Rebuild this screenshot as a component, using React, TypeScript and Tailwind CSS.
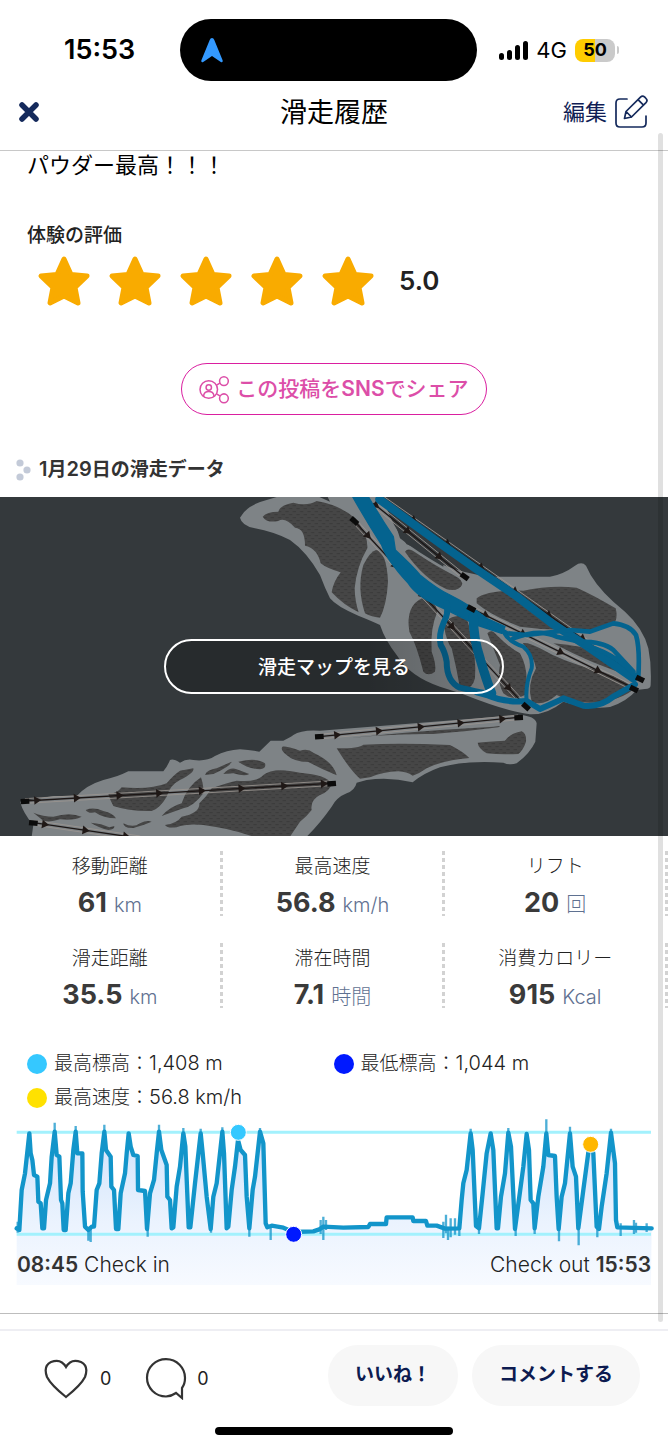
const SIGNAL_BARS = ["h-[7px]", "h-[10px]", "h-[15px]", "h-[19px]"];

const STATS = [
  { label: "移動距離", value: "61", unit: "km" },
  { label: "最高速度", value: "56.8", unit: "km/h" },
  { label: "リフト", value: "20", unit: "回" },
  { label: "滑走距離", value: "35.5", unit: "km" },
  { label: "滞在時間", value: "7.1", unit: "時間" },
  { label: "消費カロリー", value: "915", unit: "Kcal" },
];

const LEGEND = [
  { color: "bg-[#35c8ff]", label: "最高標高：", value: "1,408 m" },
  { color: "bg-[#0019ff]", label: "最低標高：", value: "1,044 m" },
  { color: "bg-[#ffe100]", label: "最高速度：", value: "56.8 km/h" },
];

const ELEVATION =
  "50,565 58,570 65,450 75,400 88,280 92,340 97,360 102,405 112,410 115,485 122,490 127,565 132,565 138,480 150,430 155,350 164,275 170,345 178,350 183,480 187,490 191,570 197,570 205,460 212,430 220,330 227,275 232,340 247,340 248,455 255,560 265,570 275,560 282,560 290,450 298,430 305,340 313,275 318,330 332,350 334,440 342,450 348,567 355,567 362,460 375,400 380,340 386,280 392,320 400,345 413,348 414,450 435,453 441,567 450,460 462,420 470,340 477,275 484,330 500,375 502,470 510,480 515,565 520,562 530,440 540,380 550,280 556,320 566,562 571,562 585,430 602,280 608,340 620,470 632,567 640,470 650,430 667,275 672,340 680,565 685,560 695,450 705,380 714,300 722,330 735,345 740,470 748,565 758,450 765,410 780,275 790,310 797,550 802,562 815,557 850,563 880,576 940,574 958,568 970,560 1030,563 1105,561 1110,552 1158,552 1160,532 1238,532 1240,543 1278,543 1282,557 1310,557 1335,566 1378,565 1385,480 1390,430 1400,390 1412,280 1418,330 1428,558 1437,565 1448,460 1460,340 1472,280 1480,330 1490,565 1494,565 1503,470 1515,400 1525,278 1533,320 1545,567 1558,470 1570,380 1580,282 1587,330 1592,480 1600,490 1604,565 1615,470 1630,380 1639,280 1645,345 1665,348 1670,470 1676,567 1685,470 1695,430 1710,280 1718,380 1728,410 1735,565 1750,450 1770,300 1780,340 1790,560 1797,567 1805,500 1820,400 1833,278 1845,370 1848,540 1852,562 1955,565";

const SPIKES =
  "M164 300V248M227 300V258M313 300V254M477 300V254M550 290V264M602 290V266M667 290V262M780 290V264M265 560V602M272 560V606M443 560V590M633 560V578M748 560V590M812 560V600M53 545V578M962 540V582M970 530V600M978 540V570M1330 545V594M1338 524V580M1344 560V600M1352 535V592M1365 535V584M1378 545V588M1412 290V266M1525 290V264M1639 300V238M1710 290V260M1833 290V266M1547 560V588M1604 560V582M1677 560V604M1736 560V616M1792 560V592M1862 550V588M1902 540V582M1908 548V578M1940 550V576M1437 560V582";

function Lift({ from, to, marks }: { from: [number, number]; to: [number, number]; marks: number[] }) {
  const dx = to[0] - from[0];
  const dy = to[1] - from[1];
  const angle = (Math.atan2(dy, dx) * 180) / Math.PI;
  const length = Math.hypot(dx, dy);
  return (
    <g transform={`translate(${from[0]} ${from[1]}) rotate(${angle})`}>
      <path d={`M0 7H${length}M0 -7H${length}`} stroke="#9a9490" strokeWidth="2.500" />
      <path d={`M0 0H${length}`} stroke="#1c1615" strokeWidth="4" />
      {marks.map((m) => (
        <path key={m} d="M-9 -13L12 0L-9 13Z" fill="#1f1816" transform={`translate(${m * length} 0)`} />
      ))}
    </g>
  );
}

function Station({ x, y, angle }: { x: number; y: number; angle: number }) {
  return <rect x="-13" y="-8" width="26" height="16" fill="#0b0b0b" transform={`translate(${x} ${y}) rotate(${angle})`} />;
}

function SlopeMap() {
  return (
    <svg viewBox="0 497 668 339" className="block w-full" role="img" aria-label="滑走マップ">
      <defs>
        <pattern id="trees" width="22" height="18" patternUnits="userSpaceOnUse">
          <rect width="22" height="18" fill="#464646" />
          <path d="M1 5h10M12 14h10" stroke="#3c3c3c" strokeWidth="4" />
        </pattern>
      </defs>
      <rect y="497" width="668" height="339" fill="#34393c" />
      <g transform="translate(230 495) scale(0.33333)" fill="none">
        <path
          fill="#7e8386"
          d="M30 68Q50 30 110 15L160 0H440L470 40Q490 95 530 148Q580 165 640 210Q700 235 780 245L960 245Q1000 238 1035 212Q1055 198 1068 212Q1090 265 1150 320L1185 350Q1240 400 1255 460Q1265 510 1262 570Q1262 582 1245 582L1220 585Q1190 620 1140 636Q1080 645 1000 620Q950 660 900 658Q830 650 700 598L630 575Q540 545 500 480Q465 435 450 390Q430 380 385 362Q320 335 300 310Q285 280 270 240Q230 170 180 135Q130 110 75 100Q35 92 30 68Z"
        />
        <path fill="#34393c" d="M255 0L300 20L290 0Z M450 0L640 185V215Q560 170 510 130Q490 60 450 0Z" />
        <g fill="url(#trees)">
          <path d="M98 65Q110 50 145 50Q150 30 190 23Q230 35 260 18Q330 30 375 70Q415 120 412 160Q380 215 374 280Q375 320 386 352Q340 330 305 292Q310 260 332 232Q290 220 272 205Q262 160 225 152Q225 100 195 98Q165 65 145 78Q110 85 98 65Z" />
          <path d="M438 165Q470 170 474 260Q470 330 450 368Q420 365 405 355Q380 280 400 210Q420 170 438 165Z" />
          <path d="M525 170Q535 155 560 175Q620 215 670 240Q700 255 696 270Q685 290 650 283Q580 250 525 170Z" />
          <path d="M580 308Q615 310 622 350Q600 400 605 470Q620 510 615 530Q595 545 580 530Q560 450 538 410Q525 330 580 308Z" />
          <path d="M740 310Q770 285 880 287Q960 270 1040 278Q1090 300 1157 340Q1165 370 1150 390Q1080 415 1010 405Q940 405 870 395Q780 360 740 325Z" />
          <path d="M642 395Q650 360 700 362Q715 370 720 410Q740 490 735 550Q725 590 690 580Q680 520 665 460Q650 440 642 395Z" />
          <path d="M772 415Q785 400 800 420Q840 460 870 475Q900 530 885 600Q850 620 820 595Q800 560 810 510Q790 460 772 415Z" />
          <path d="M878 445Q890 440 930 460Q1000 500 1080 520Q1150 535 1215 580Q1180 610 1130 618Q1050 635 980 600Q940 635 905 620Q890 570 918 520Q910 480 878 445Z" />
          <path d="M970 445Q1040 450 1110 470Q1160 500 1210 545Q1090 510 970 445Z" />
        </g>
        <Lift from={[373, 78]} to={[888, 635]} marks={[0.08, 0.24, 0.4, 0.57, 0.9]} />
        <Lift from={[430, 25]} to={[702, 245]} marks={[0.03, 0.38, 0.73]} />
        <Lift from={[724, 340]} to={[1212, 580]} marks={[0.09, 0.32, 0.55, 0.78]} />
        <Lift from={[450, 5]} to={[1230, 552]} marks={[0.13, 0.26, 0.39, 0.52, 0.65, 0.78, 0.91]} />
        <g strokeLinejoin="round" strokeLinecap="round" stroke="#04638f">
          <path fill="#04638f" strokeWidth="4" d="M365 0H412Q450 65 490 125L496 165Q550 215 570 240Q625 285 660 300Q720 330 770 370L825 395L815 415L740 390Q690 365 640 340Q560 305 535 265Q470 195 455 150Q410 80 365 0Z" />
          <path strokeWidth="25" d="M448 13L630 145L740 223L860 304L970 388L1060 446L1210 550" />
          <path strokeWidth="14" d="M1060 450Q1150 470 1220 545M1225 545Q1230 460 1218 420Q1200 390 1150 385L1080 410L1020 405L890 420L830 415L780 385M850 430Q930 400 980 425L1050 440Q1120 440 1150 465L1210 530" />
          <path strokeWidth="12" d="M820 410Q835 440 880 455Q910 480 905 520Q885 570 890 620" />
          <path strokeWidth="18" d="M650 325Q657 355 640 385Q625 420 632 450Q645 470 650 500Q650 560 690 578Q740 590 770 595" />
          <path strokeWidth="28" d="M730 365Q730 430 750 490Q770 560 785 595" />
          <path strokeWidth="18" d="M740 592L770 600Q830 625 890 618L930 642Q980 620 1000 610L1060 632Q1110 638 1150 605L1215 568" />
        </g>
        <Station x={373} y={78} angle={42} />
        <Station x={704} y={245} angle={35} />
        <Station x={724} y={341} angle={27} />
        <Station x={888} y={635} angle={42} />
        <Station x={1230} y={552} angle={27} />
        <Station x={1212} y={582} angle={27} />
      </g>
      <g transform="translate(0 700) scale(0.33333)" fill="none">
        <path
          fill="#7e8386"
          d="M60 305L160 288H230Q260 255 310 240Q350 232 385 214H490Q502 200 510 180Q520 175 540 188Q560 175 580 180Q620 185 645 168Q680 150 720 148Q750 150 778 155L812 122H850Q875 110 880 105Q905 88 960 92L1560 45Q1605 48 1610 70L1606 125Q1590 160 1550 190Q1530 197 1510 188Q1400 180 1320 202Q1270 220 1238 247Q1170 230 1100 240L1070 248Q1065 270 1040 280Q1010 292 995 320Q960 370 920 410H95L100 375Q70 340 60 305Z"
        />
        <g fill="url(#trees)">
          <path d="M325 282Q350 282 365 262Q450 270 500 250Q520 225 540 212L580 205Q585 218 540 240Q510 255 500 290Q480 325 455 333Q390 335 340 318Q330 300 325 282Z" />
          <path d="M485 348Q510 320 545 310Q560 260 603 232Q612 260 610 280Q580 320 550 325Z" />
          <path d="M615 225Q620 210 650 205L695 185Q690 200 640 222Z M670 222Q690 200 710 208L748 222Q735 230 700 220Z M715 185Q770 172 795 190Q800 205 780 208Q740 205 715 185Z" />
          <path d="M635 265Q680 248 710 242Q770 248 790 225Q820 200 900 218Q980 225 995 250Q990 275 960 285Q930 300 935 330Q920 350 900 365L870 410H760Q690 385 610 375Q560 370 530 382Q500 385 495 375Q530 370 545 350Q600 340 598 310Q620 290 635 265Z" />
          <path d="M100 338Q130 350 160 350Q210 335 245 350Q225 362 180 358Q150 368 130 362Z M257 330Q280 320 310 333Q340 340 348 355Q310 355 285 337Q265 342 257 330Z M272 368Q310 372 328 382L343 378Q345 388 325 390Q300 385 272 368Z M370 370Q400 385 420 370Q440 360 455 365Q425 378 400 384Q370 385 370 370Z" />
          <path d="M847 140Q860 138 900 152Q925 145 940 158Q1000 185 1010 226Q970 210 925 186Q880 185 860 165Q840 150 847 140Z" />
          <path d="M1010 145Q1080 145 1090 134Q1200 128 1350 135Q1390 155 1408 174Q1330 180 1280 205Q1260 220 1238 227Q1220 215 1195 214Q1150 215 1110 232L1080 236Q1050 210 1010 145Z" />
          <path d="M1433 128Q1460 125 1515 122Q1530 100 1565 94Q1580 100 1578 125Q1570 150 1555 162Q1500 165 1460 160Q1435 145 1433 128Z" />
          <path d="M960 124Q1200 95 1480 80Q1510 75 1495 82Q1400 95 1300 102Q1150 100 960 124Z" />
        </g>
        <Lift from={[75, 303]} to={[990, 250]} marks={[0.04, 0.17, 0.31, 0.44, 0.58, 0.71, 0.85, 0.98]} />
        <Lift from={[100, 368]} to={[420, 415]} marks={[0.11, 0.49, 0.87]} />
        <Lift from={[958, 110]} to={[1555, 52]} marks={[0.09, 0.3, 0.51, 0.71, 0.92]} />
        <Station x={75} y={304} angle={-3} />
        <Station x={100} y={369} angle={6} />
        <Station x={995} y={251} angle={-4} />
        <Station x={958} y={110} angle={-3} />
        <Station x={1556} y={53} angle={-3} />
      </g>
    </svg>
  );
}

function ElevationChart() {
  return (
    <svg viewBox="0 240 2004 500" className="block w-full overflow-visible" role="img" aria-label="標高グラフ">
      <defs>
        <linearGradient id="area" x1="0" y1="270" x2="0" y2="735" gradientUnits="userSpaceOnUse">
          <stop offset="0" stopColor="#cfe2fb" />
          <stop offset="0.6" stopColor="#ebf3fe" />
          <stop offset="1" stopColor="#f7faff" />
        </linearGradient>
      </defs>
      <polygon points={`50,735 ${ELEVATION} 1953,735`} fill="url(#area)" />
      <path d="M50 277H1953M50 583H1953" stroke="#a3f1fd" strokeWidth="9" />
      <path d={SPIKES} stroke="#1295ca" strokeWidth="7" opacity="0.75" />
      <polyline points={ELEVATION} fill="none" stroke="#1295ca" strokeWidth="13" strokeLinejoin="round" strokeLinecap="round" />
      <g stroke="#fff" strokeWidth="3">
        <circle cx="715" cy="277" r="24" fill="#35c8ff" />
        <circle cx="881" cy="583" r="24" fill="#0019ff" />
        <circle cx="1772" cy="313" r="24" fill="#ffb700" />
      </g>
    </svg>
  );
}

export default function App() {
  return (
    <div className="relative flex min-h-screen flex-col bg-white font-['Inter','Noto_Sans_CJK_JP',sans-serif] text-[#222]">
      <div className="grid grid-cols-[27%_auto_1fr] items-center pt-[19px]">
        <time className="pl-16 text-[27px] leading-8 font-semibold text-black">15:53</time>
        <div className="flex h-[62px] w-[297px] items-center rounded-full bg-black pl-5">
          <svg viewBox="0 0 22 25" className="h-[25px] w-6" fill="#3399ff">
            <path d="M11 0Q12.600 0 13.300 2L21.700 22.500Q22 25 19.800 24L11 18L2.200 24Q0 25 .3 22.500L8.700 2Q9.400 0 11 0Z" />
          </svg>
        </div>
        <div className="flex items-center pl-[22px]">
          <div className="flex items-end gap-[3px]">
            {SIGNAL_BARS.map((height) => (
              <span key={height} className={`w-[5px] rounded-sm bg-black ${height}`} />
            ))}
          </div>
          <span className="ml-2 text-[22px] leading-8 text-black">4G</span>
          <span className="ml-2 flex h-[23px] w-10 items-center justify-center rounded-lg bg-[linear-gradient(to_right,#ffcc00_50%,#cacaca_50%)] text-lg leading-6 font-bold text-black">
            50
          </span>
          <span className="ml-[2px] h-2 w-[2px] rounded-r-full bg-[#cacaca]" />
        </div>
      </div>

      <header className="grid h-[70px] grid-cols-[1fr_auto_1fr] items-center border-b border-[#c8c8c8] pb-2">
        <button aria-label="閉じる" className="ml-[18px] size-[22px] justify-self-start">
          <svg viewBox="0 0 22 22" className="size-full" stroke="#152a5c" strokeWidth="5.500" strokeLinecap="round">
            <path d="M4 4L18 18M18 4L4 18" />
          </svg>
        </button>
        <h1 className="pt-[2px] text-[27px] leading-9 text-black">滑走履歴</h1>
        <button className="mr-5 flex items-center gap-2 justify-self-end text-[22px] leading-8 text-[#101d55]">
          編集
          <svg viewBox="0 0 33 33" className="size-[33px]" fill="none" stroke="#152a5c" strokeWidth="1.700" strokeLinecap="round" strokeLinejoin="round">
            <path d="M12 4H5Q1 4 1 8V28Q1 32 5 32H27Q31 32 31 28V21" />
            <path d="M9.500 23.500L11 16.500L25.500 2.200Q27.500 .2 29.800 2.200L31 3.500Q33 5.600 31 7.700L16.500 22L9.500 23.500ZM11 16.500L16.500 22M23 4.700L28.500 10.200" />
          </svg>
        </button>
      </header>

      <main className="flex flex-col">
        <p className="pl-[27px] text-[22px] leading-7 text-black">パウダー最高！！！</p>
        <h2 className="mt-[43px] pl-[27px] text-[19px] leading-7 font-medium">体験の評価</h2>
        <div className="mt-[5px] flex items-center pl-[37px]">
          <div className="flex gap-[17px]" role="img" aria-label="5つ星">
            {[1, 2, 3, 4, 5].map((n) => (
              <svg key={n} viewBox="0 0 54 52" className="h-[52px] w-[54px]" fill="#f9ab00" stroke="#f9ab00" strokeWidth="5" strokeLinejoin="round">
                <path d="M27 4L34 19.500L50 21L38 32.500L41 48L27 41L13 48L16 32.500L4 21L20 19.500Z" />
              </svg>
            ))}
          </div>
          <span className="ml-6 text-[26px] leading-8 font-semibold">5.0</span>
        </div>

        <button className="mx-auto mt-14 flex h-[52px] items-center gap-[6px] rounded-full border border-[#da1fa0] px-[17px] text-[21px] leading-7 font-medium text-[#dc4ea8]">
          <svg viewBox="598 466 92 86" className="h-[29px] w-[31px]" fill="none" stroke="#dc4ea8" strokeWidth="4.500">
            <circle cx="627" cy="509" r="26" />
            <circle cx="627" cy="503" r="8" />
            <path d="M612 530V526Q614 515 627 515Q640 515 642 526V530M650 496L660 490M650 522L660 528" />
            <circle cx="672" cy="484" r="13" />
            <circle cx="672" cy="535" r="13" />
          </svg>
          <span>
            この投稿を<span className="font-semibold">SNS</span>でシェア
          </span>
        </button>

        <div className="mt-10 flex items-center gap-2 pl-4">
          <svg viewBox="0 0 15 22" className="h-[22px] w-[15px]" fill="#c3cad8">
            <circle cx="4" cy="4" r="3.600" />
            <circle cx="11" cy="11" r="3.600" />
            <circle cx="4" cy="18" r="3.600" />
          </svg>
          <h2 className="text-[19px] leading-7 font-semibold text-[#333]">
            <span className="text-xl leading-7">1</span>月<span className="text-xl leading-7">29</span>日の滑走データ
          </h2>
        </div>

        <div className="relative mt-[13px]">
          <SlopeMap />
          <button className="absolute inset-x-[164px] top-[142px] h-[55px] rounded-full border-2 border-white bg-linear-to-r from-black/25 from-60% to-black/5 pt-[2px] text-[19px] leading-7 font-medium text-white">
            滑走マップを見る
          </button>
        </div>

        <dl className="mt-[15px] grid grid-cols-3 gap-y-[22px]">
          {STATS.map((stat) => (
            <div key={stat.label} className="flex">
              <div className="flex flex-1 flex-col items-center gap-1 pt-[2px]">
                <dt className="text-[19px] leading-7 font-light">{stat.label}</dt>
                <dd className="flex h-9 items-baseline gap-[7px] text-[27px] leading-9 font-bold text-[#3a3a3a]">
                  {stat.value}
                  <span className="text-[20px] font-light text-[#5f7191]">{stat.unit}</span>
                </dd>
              </div>
              <div className="h-[65px] w-[3px] bg-[repeating-linear-gradient(to_bottom,#d2d2d2_0_4px,transparent_4px_7px)]" />
            </div>
          ))}
        </dl>

        <ul className="mt-9 grid grid-cols-2 gap-y-[5px] pr-7 pl-[27px]">
          {LEGEND.map((item) => (
            <li key={item.label} className="flex items-center gap-[7px] text-[19px] leading-7 font-light">
              <span className={`size-5 rounded-full ${item.color}`} />
              <span>
                {item.label}
                <span className="text-xl leading-7">{item.value}</span>
              </span>
            </li>
          ))}
        </ul>

        <div className="relative mt-2">
          <ElevationChart />
          <div className="absolute inset-x-[17px] bottom-2 flex justify-between text-[21px] leading-7 font-light">
            <span>
              <b className="font-semibold text-[#333]">08:45</b> Check in
            </span>
            <span>
              Check out <b className="font-semibold text-[#333]">15:53</b>
            </span>
          </div>
        </div>
      </main>

      <footer className="mt-[26px] border-t border-[#bdbdbd] pt-[15px]">
        <div className="flex items-center border-t-2 border-[#eeeef3] pt-[14px] pr-7 pl-11">
          <button aria-label="いいねの数" className="flex items-center gap-3 pt-2 text-lg leading-7">
            <svg viewBox="0 0 44 40" className="h-10 w-11" fill="none" stroke="#333" strokeWidth="2.200" strokeLinejoin="miter">
              <path d="M22 38Q7 26 3 18Q-1 7 7 3Q17-1 22 8Q27-1 37 3Q45 7 41 18Q37 26 22 38Z" />
            </svg>
            0
          </button>
          <button aria-label="コメントの数" className="ml-[34px] flex items-center gap-2 pt-2 text-lg leading-7">
            <svg viewBox="0 0 44 42" className="h-[42px] w-11" fill="none" stroke="#333" strokeWidth="2.200">
              <path d="M37 30V40L31 35Q26 38.500 21 38.500A19 18.700 0 1 1 40 20Q40 26 37 30Z" />
            </svg>
            0
          </button>
          <button className="ml-auto h-[61px] rounded-[30px] bg-[#f7f7f7] px-[27px] text-[19px] leading-7 font-bold text-[#0d1b50]">いいね！</button>
          <button className="ml-[14px] h-[61px] rounded-[30px] bg-[#f7f7f7] px-[27px] text-[19px] leading-7 font-bold text-[#0d1b50]">コメントする</button>
        </div>
        <div className="mx-auto mt-[21px] mb-[14px] h-2 w-[238px] rounded-full bg-black" />
      </footer>

      <div className="absolute top-[133px] right-[5px] bottom-[127px] w-[5px] rounded-full bg-black/12" />
    </div>
  );
}
